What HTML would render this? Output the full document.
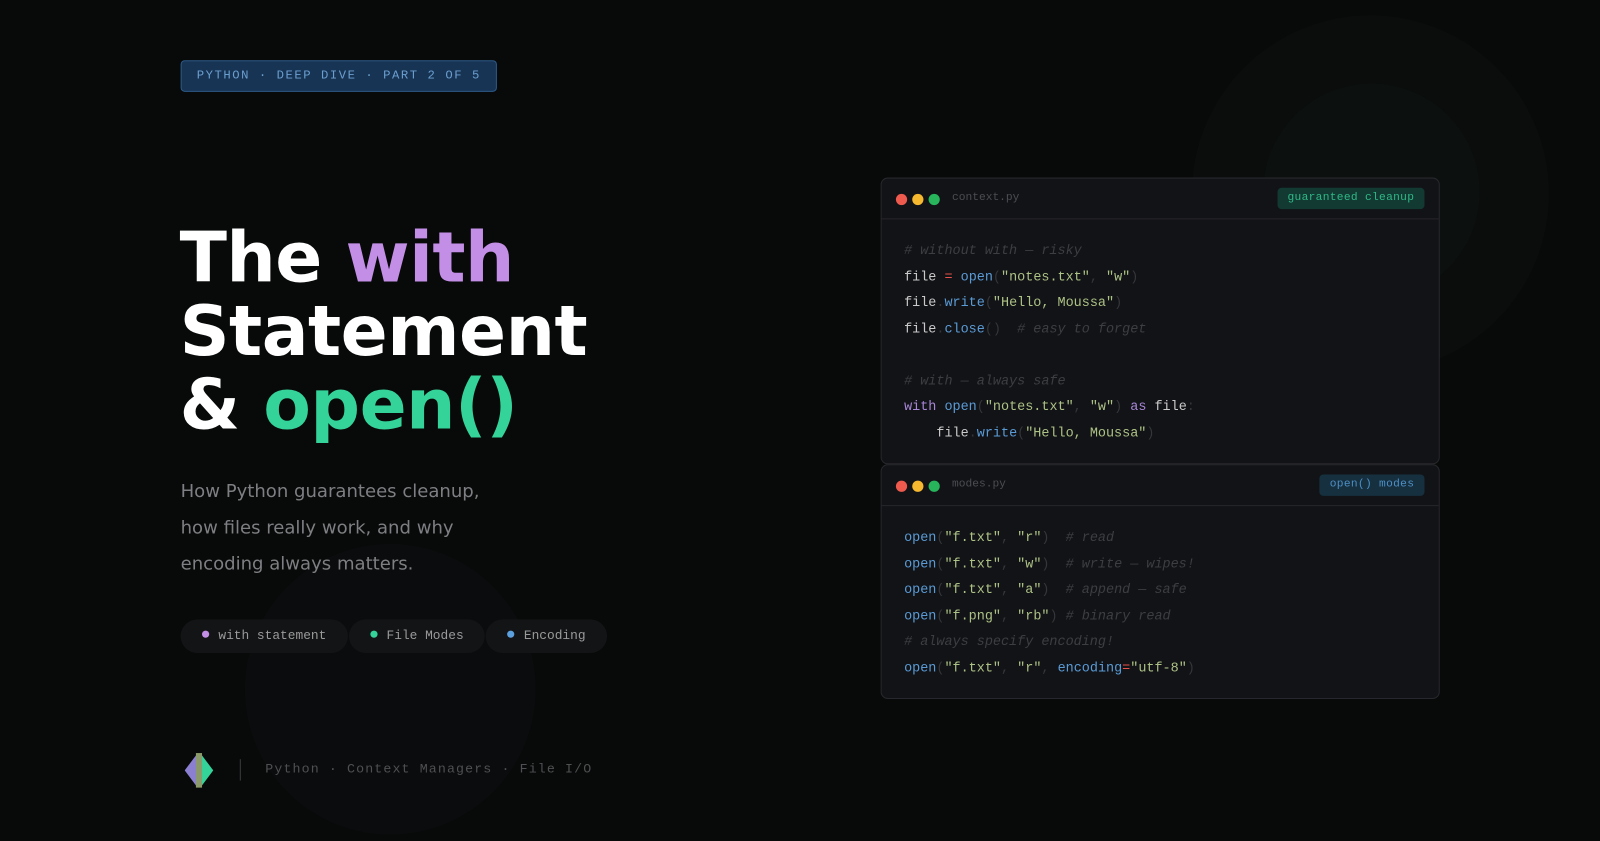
<!DOCTYPE html>
<html><head><meta charset="utf-8"><style>
*{margin:0;padding:0;box-sizing:border-box}
body{width:1600px;height:840px;background:#080909;overflow:hidden;position:relative;font-family:"DejaVu Sans",sans-serif}
#w{position:absolute;left:0;top:0;width:1568px;height:824px;transform:scale(1.0204);transform-origin:0 0}
.circ{position:absolute;border-radius:50%}
.badge{position:absolute;left:177px;top:59px;width:310px;height:31px;background:#183454;border:1px solid #2c5a88;border-radius:4px;color:#6b9fd0;font:12px "Liberation Mono",monospace;letter-spacing:1.5px;line-height:29px;text-align:center}
h1{position:absolute;left:176px;top:218px;font:bold 68px/72px "DejaVu Sans",sans-serif;color:#fff;letter-spacing:-0.5px}
.p{color:#c38ee6}.g{color:#34d399}
.sub{position:absolute;left:177px;top:465px;color:#7d7f82;font-size:17.7px;line-height:35.5px}
.pills{position:absolute;left:177px;top:607px;display:flex}
.pill{height:33px;border-radius:17px;background:#131416;color:#9a9a9a;font:12.6px "Liberation Mono",monospace;line-height:33px;padding:0 21px 0 21px;margin-right:1px}
.pill i{display:inline-block;width:7px;height:7px;border-radius:50%;margin-right:9px;vertical-align:1px}
.foot{position:absolute;left:260px;top:747px;color:#4e5052;font:13px "Liberation Mono",monospace;letter-spacing:1.1px;line-height:14px}
.card{position:absolute;left:863px;width:548px;background:#121317;border:1px solid #27282d;border-radius:7px}
.hd{height:40px;border-bottom:1px solid #25262b;position:relative}
.dot{position:absolute;top:15px;width:11px;height:11px;border-radius:50%}
.fn{position:absolute;left:69px;top:13px;color:#4b4d52;font:11px "Liberation Mono",monospace}
.tag{position:absolute;right:14px;top:9px;height:21px;border-radius:4px;font:11px "Liberation Mono",monospace;line-height:21px;padding:0 10px;letter-spacing:.3px}
pre{font:13.2px/25.5px "Liberation Mono",monospace;color:#c9c9c9;padding:18px 22px 0}
.c{color:#3c3e42;font-style:italic}.f{color:#5a9bd6}.s{color:#adc285}.o{color:#e8524a}.k{color:#a786d6}.d{color:#34363a}
</style></head><body><div id="w">
<div class="circ" style="left:1168px;top:15px;width:350px;height:350px;background:#0b0d0d"></div>
<div class="circ" style="left:1238px;top:82px;width:212px;height:212px;background:#0c100f"></div>
<div class="circ" style="left:240px;top:533px;width:285px;height:285px;background:#0b0c0d"></div>
<div class="badge">PYTHON · DEEP DIVE · PART 2 OF 5</div>
<h1>The <span class="p">with</span><br>Statement<br>&amp; <span class="g">open()</span></h1>
<div class="sub">How Python guarantees cleanup,<br>how files really work, and why<br>encoding always matters.</div>
<div class="pills">
<div class="pill"><i style="background:#c38ee6"></i>with statement</div>
<div class="pill"><i style="background:#34d399"></i>File Modes</div>
<div class="pill"><i style="background:#5ca0de"></i>Encoding</div>
</div>
<svg style="position:absolute;left:181px;top:738px" width="28" height="34" viewBox="0 0 28 34"><polygon points="12,1 0,17 12,33" fill="#8b7fd1"/><polygon points="16,1 28,17 16,33" fill="#34d399"/><rect x="11" y="0" width="6" height="34" fill="#8a9a6a"/></svg>
<div style="position:absolute;left:235px;top:744px;width:1px;height:21px;background:#3a3c3e"></div>
<div class="foot">Python · Context Managers · File I/O</div>

<div class="card" style="top:174px;height:281px">
<div class="hd"><span class="dot" style="left:14px;background:#ef5a4e"></span><span class="dot" style="left:30px;background:#f5b82e"></span><span class="dot" style="left:46px;background:#27b45a"></span><span class="fn">context.py</span><span class="tag" style="background:#123a33;color:#2fb985">guaranteed cleanup</span></div>
<pre><span class="c"># without with — risky</span>
file <span class="o">=</span> <span class="f">open</span><span class="d">(</span><span class="s">"notes.txt"</span><span class="d">,</span> <span class="s">"w"</span><span class="d">)</span>
file<span class="d">.</span><span class="f">write</span><span class="d">(</span><span class="s">"Hello, Moussa"</span><span class="d">)</span>
file<span class="d">.</span><span class="f">close</span><span class="d">()</span>  <span class="c"># easy to forget</span>

<span class="c"># with — always safe</span>
<span class="k">with</span> <span class="f">open</span><span class="d">(</span><span class="s">"notes.txt"</span><span class="d">,</span> <span class="s">"w"</span><span class="d">)</span> <span class="k">as</span> file<span class="d">:</span>
    file<span class="d">.</span><span class="f">write</span><span class="d">(</span><span class="s">"Hello, Moussa"</span><span class="d">)</span></pre>
</div>

<div class="card" style="top:455px;height:230px">
<div class="hd"><span class="dot" style="left:14px;background:#ef5a4e"></span><span class="dot" style="left:30px;background:#f5b82e"></span><span class="dot" style="left:46px;background:#27b45a"></span><span class="fn">modes.py</span><span class="tag" style="background:#16303f;color:#4d8fc6">open() modes</span></div>
<pre><span class="f">open</span><span class="d">(</span><span class="s">"f.txt"</span><span class="d">,</span> <span class="s">"r"</span><span class="d">)</span>  <span class="c"># read</span>
<span class="f">open</span><span class="d">(</span><span class="s">"f.txt"</span><span class="d">,</span> <span class="s">"w"</span><span class="d">)</span>  <span class="c"># write — wipes!</span>
<span class="f">open</span><span class="d">(</span><span class="s">"f.txt"</span><span class="d">,</span> <span class="s">"a"</span><span class="d">)</span>  <span class="c"># append — safe</span>
<span class="f">open</span><span class="d">(</span><span class="s">"f.png"</span><span class="d">,</span> <span class="s">"rb"</span><span class="d">)</span> <span class="c"># binary read</span>
<span class="c"># always specify encoding!</span>
<span class="f">open</span><span class="d">(</span><span class="s">"f.txt"</span><span class="d">,</span> <span class="s">"r"</span><span class="d">,</span> <span class="f">encoding</span><span class="o">=</span><span class="s">"utf-8"</span><span class="d">)</span></pre>
</div>
</div></body></html>
